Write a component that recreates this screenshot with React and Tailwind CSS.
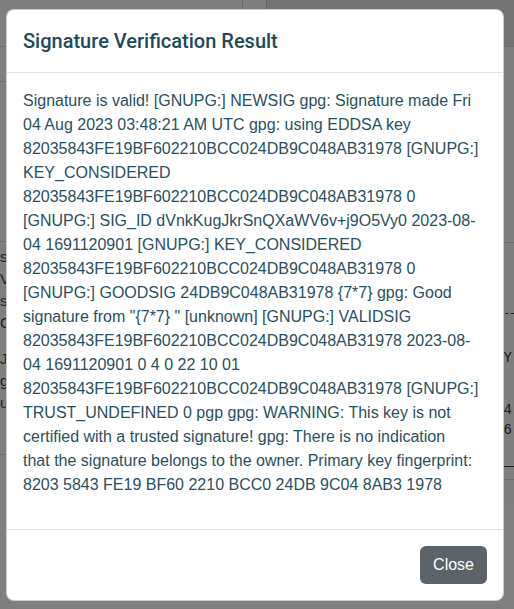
const lines = [
  "Signature is valid! [GNUPG:] NEWSIG gpg: Signature made Fri",
  "04 Aug 2023 03:48:21 AM UTC gpg: using EDDSA key",
  "82035843FE19BF602210BCC024DB9C048AB31978 [GNUPG:]",
  "KEY_CONSIDERED",
  "82035843FE19BF602210BCC024DB9C048AB31978 0",
  "[GNUPG:] SIG_ID dVnkKugJkrSnQXaWV6v+j9O5Vy0 2023-08-",
  "04 1691120901 [GNUPG:] KEY_CONSIDERED",
  "82035843FE19BF602210BCC024DB9C048AB31978 0",
  "[GNUPG:] GOODSIG 24DB9C048AB31978 {7*7} gpg: Good",
  'signature from "{7*7} " [unknown] [GNUPG:] VALIDSIG',
  "82035843FE19BF602210BCC024DB9C048AB31978 2023-08-",
  "04 1691120901 0 4 0 22 10 01",
  "82035843FE19BF602210BCC024DB9C048AB31978 [GNUPG:]",
  "TRUST_UNDEFINED 0 pgp gpg: WARNING: This key is not",
  "certified with a trusted signature! gpg: There is no indication",
  "that the signature belongs to the owner. Primary key fingerprint:",
  "8203 5843 FE19 BF60 2210 BCC0 24DB 9C04 8AB3 1978",
];

function PageBehind() {
  return (
    <div className="flex h-full w-full flex-col bg-white font-['Liberation_Sans',sans-serif] text-[#222]">
      {/* top bar */}
      <div className="flex h-[47px] border-b border-[#d6d6d6]">
        <div className="w-[243px] border-r border-[#cfcfcf] bg-white" />
        <div className="w-[24px] border-r border-[#cfcfcf] bg-white" />
        <div className="flex-1 bg-[#e6e6e6]" />
      </div>
      <div className="flex flex-1">
        {/* left column */}
        <div className="flex w-[257px] flex-col">
          <div className="h-[35px] border-b border-[#d6d6d6]" />
          <div className="h-[160px] border-b border-[#d6d6d6]" />
          <div className="flex flex-col pt-[4px] text-[15px] leading-[22px] text-[#444]">
            <span>s</span>
            <span>V</span>
            <span>s</span>
            <span>C</span>
            <span className="mt-[14px]">J</span>
            <span>g</span>
            <span>u</span>
          </div>
          <div className="mt-[40px] border-b border-[#d6d6d6]" />
        </div>
        {/* right column */}
        <div className="flex flex-1 flex-col">
          <div className="h-[196px] border-b border-[#d6d6d6]" />
          <div className="h-[70px]" />
          <div className="ml-[246px] w-[20px] border-t border-dashed border-[#444]" />
          <div className="ml-[247px] mt-[34px] flex flex-col font-['Liberation_Mono',monospace] text-[14px] leading-[20px] text-[#333]">
            <span>/Y</span>
            <span className="mt-[32px]">94</span>
            <span>t6</span>
          </div>
          <div className="ml-[246px] mt-[26px] w-[20px] border-t border-[#444]" />
          <div className="mt-[12px] border-b border-[#d6d6d6]" />
        </div>
      </div>
    </div>
  );
}

export default function App() {
  return (
    <div className="relative h-[609px] w-[514px] overflow-hidden">
      <PageBehind />

      {/* backdrop */}
      <div className="absolute inset-0 bg-black/50" />

      {/* modal */}
      <div className="absolute inset-0 pl-[6px] pt-[9px]">
        <div className="flex w-[498px] flex-col rounded-lg border border-black/20 bg-white font-['Liberation_Sans',sans-serif]">
          <div className="flex items-center border-b border-[#dee2e6] p-4">
            <h5 className="text-[20px] font-medium leading-[30px] text-[#1f4a5a] font-['Roboto',sans-serif]">
              Signature Verification Result
            </h5>
          </div>

          <div className="p-4">
            <p className="mb-4 text-[16px] leading-[24px] text-[#2a5060]">
              {lines.map((line, i) => (
                <span key={i} className="block whitespace-nowrap">
                  {line}
                </span>
              ))}
            </p>
          </div>

          <div className="flex justify-end border-t border-[#dee2e6] p-3">
            <button className="m-1 h-[38px] rounded-md bg-[#5c636a] px-[13px] text-[16px] leading-[24px] text-white">
              Close
            </button>
          </div>
        </div>
      </div>
    </div>
  );
}
